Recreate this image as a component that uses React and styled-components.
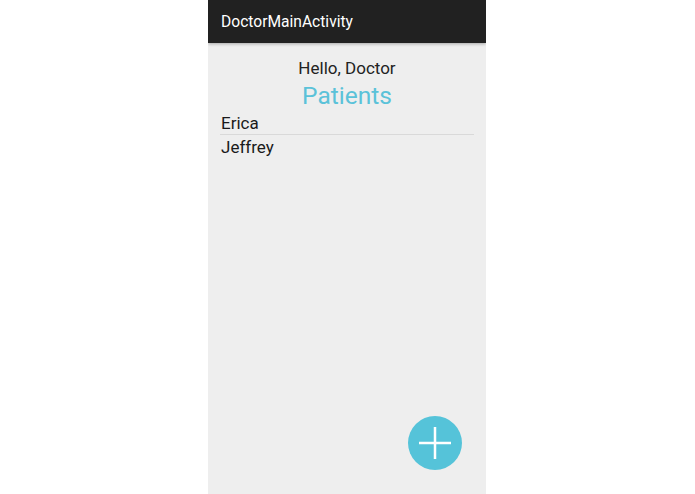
import React from "react";
import styled, { createGlobalStyle } from "styled-components";

const GlobalStyle = createGlobalStyle`
  html, body {
    margin: 0;
    padding: 0;
    background: #ffffff;
  }
  body {
    font-family: Roboto, "Liberation Sans", sans-serif;
  }
`;

const Page = styled.div`
  width: 695px;
  height: 494px;
  display: flex;
  justify-content: center;
  padding-left: 1px;
  box-sizing: border-box;
`;

const Phone = styled.div`
  width: 278px;
  height: 494px;
  margin-right: 2px;
  background: #eeeeee;
  display: flex;
  flex-direction: column;
  position: relative;
  overflow: hidden;
`;

const ActionBar = styled.div`
  height: 43px;
  background: #212121;
  display: flex;
  align-items: center;
  padding-left: 13px;
  color: #ffffff;
  font-size: 15.6px;
  box-shadow: 0 1px 3px rgba(0, 0, 0, 0.3);
  z-index: 1;
`;

const Content = styled.div`
  flex: 1;
  display: flex;
  flex-direction: column;
  padding: 15px 12px 0 12px;
`;

const Greeting = styled.div`
  text-align: center;
  font-size: 17px;
  color: #222222;
  line-height: 20px;
`;

const Heading = styled.div`
  text-align: center;
  font-size: 24.5px;
  color: #5bc2d9;
  line-height: 30px;
  margin-top: 3px;
`;

const PatientList = styled.ul`
  list-style: none;
  margin: 0;
  padding: 0;
`;

const PatientRow = styled.li`
  font-size: 17px;
  color: #1a1a1a;
  line-height: 20px;
  padding: 2px 1px 1px 1px;
  border-bottom: ${(p) => (p.$last ? "none" : "1px solid #d9d9d9")};
`;

const Fab = styled.button`
  position: absolute;
  right: 24px;
  bottom: 24px;
  width: 54px;
  height: 54px;
  border-radius: 50%;
  border: none;
  background: #55c3d9;
  display: flex;
  align-items: center;
  justify-content: center;
  padding: 0;
`;

const patients = ["Erica", "Jeffrey"];

export default function App() {
  return (
    <>
      <GlobalStyle />
      <Page>
        <Phone>
          <ActionBar>DoctorMainActivity</ActionBar>
          <Content>
            <Greeting>Hello, Doctor</Greeting>
            <Heading>Patients</Heading>
            <PatientList>
              {patients.map((name, i) => (
                <PatientRow key={name} $last={i === patients.length - 1}>
                  {name}
                </PatientRow>
              ))}
            </PatientList>
          </Content>
          <Fab aria-label="Add patient">
            <svg width="32" height="32" viewBox="0 0 32 32">
              <path d="M16 0 V32 M0 16 H32" stroke="#ffffff" strokeWidth="2.5" />
            </svg>
          </Fab>
        </Phone>
      </Page>
    </>
  );
}
